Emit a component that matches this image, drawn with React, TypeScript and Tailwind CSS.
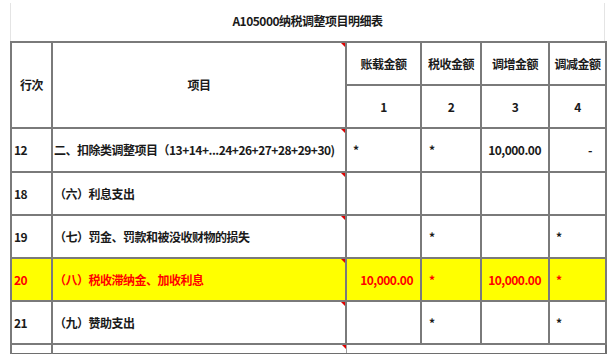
import React from 'react';

type Row = {
  no: string;
  item: string;
  c1?: string;
  c2?: string;
  c3?: string;
  c4?: string;
  hl?: boolean;
};

const rows: Row[] = [
  { no: '12', item: '二、扣除类调整项目（13+14+...24+26+27+28+29+30)', c1: '*', c2: '*', c3: '10,000.00', c4: '-' },
  { no: '18', item: '（六）利息支出' },
  { no: '19', item: '（七）罚金、罚款和被没收财物的损失', c2: '*', c4: '*' },
  { no: '20', item: '（八）税收滞纳金、加收利息', c1: '10,000.00', c2: '*', c3: '10,000.00', c4: '*', hl: true },
  { no: '21', item: '（九）赞助支出', c2: '*', c4: '*' },
];

// little red comment marker in the cell corner
const Marker = () => (
  <span className="absolute top-0 right-0 w-0 h-0 border-t-[4px] border-l-[4px] border-t-[#e00000] border-l-transparent" />
);

const cell = 'border-2 border-[#7a7a7a] p-0 align-middle';

export default function App() {
  return (
    <div className="w-[612px] h-[354px] bg-white overflow-hidden font-['Noto_Sans_CJK_SC',sans-serif] font-bold text-[12px] tracking-[-0.5px] text-[#1a1a1a]">
      {/* title */}
      <div className="ml-[10px] w-[595px] mt-[3px] h-[38px] border-x border-[#e4e4e4] flex items-center justify-center pb-[3px]">
        A105000纳税调整项目明细表
      </div>

      <table className="ml-[10px] w-[595px] table-fixed border-collapse border-2 border-[#6e6e6e]">
        <colgroup>
          <col className="w-[41px]" />
          <col className="w-[294px]" />
          <col className="w-[75px]" />
          <col className="w-[60px]" />
          <col className="w-[68px]" />
          <col className="w-[57px]" />
        </colgroup>
        <thead>
          <tr className="h-[43px]">
            <th rowSpan={2} className={`${cell} font-bold text-center`}>行次</th>
            <th rowSpan={2} className={`${cell} font-bold text-center relative`}>
              项目
              <Marker />
            </th>
            <th className={`${cell} font-bold text-center`}>账载金额</th>
            <th className={`${cell} font-bold text-center`}>税收金额</th>
            <th className={`${cell} font-bold text-center`}>调增金额</th>
            <th className={`${cell} font-bold text-center`}>调减金额</th>
          </tr>
          <tr className="h-[43px]">
            <th className={`${cell} font-bold text-center`}>1</th>
            <th className={`${cell} font-bold text-center`}>2</th>
            <th className={`${cell} font-bold text-center`}>3</th>
            <th className={`${cell} font-bold text-center`}>4</th>
          </tr>
        </thead>
        <tbody>
          {rows.map((r, i) => (
            <tr
              key={r.no}
              className={`${i === 0 ? 'h-[44px]' : 'h-[43px]'} ${r.hl ? 'bg-[#ffff00] text-[#ff0000]' : ''}`}
            >
              <td className={`${cell} pl-[2px]`}>{r.no}</td>
              <td className={`${cell} pl-[1px] relative whitespace-nowrap`}>
                {r.item}
                <Marker />
              </td>
              <td className={`${cell} ${r.c1 === '*' ? 'text-left pl-[6px]' : 'text-right pr-[7px]'}`}>{r.c1}</td>
              <td className={`${cell} text-left pl-[7px]`}>{r.c2}</td>
              <td className={`${cell} text-right pr-[7px]`}>{r.c3}</td>
              <td className={`${cell} ${r.c4 === '-' ? 'text-right pr-[13px]' : 'text-left pl-[6px]'}`}>{r.c4}</td>
            </tr>
          ))}
          <tr className="h-[10px]">
            <td className="border-l-2 border-r-2 border-[#7a7a7a] p-0" />
            <td className="border-r border-[#a0a0a0] p-0 relative">
              <Marker />
            </td>
            <td className="p-0" />
            <td className="p-0" />
            <td className="p-0" />
            <td className="p-0" />
          </tr>
        </tbody>
      </table>
    </div>
  );
}
